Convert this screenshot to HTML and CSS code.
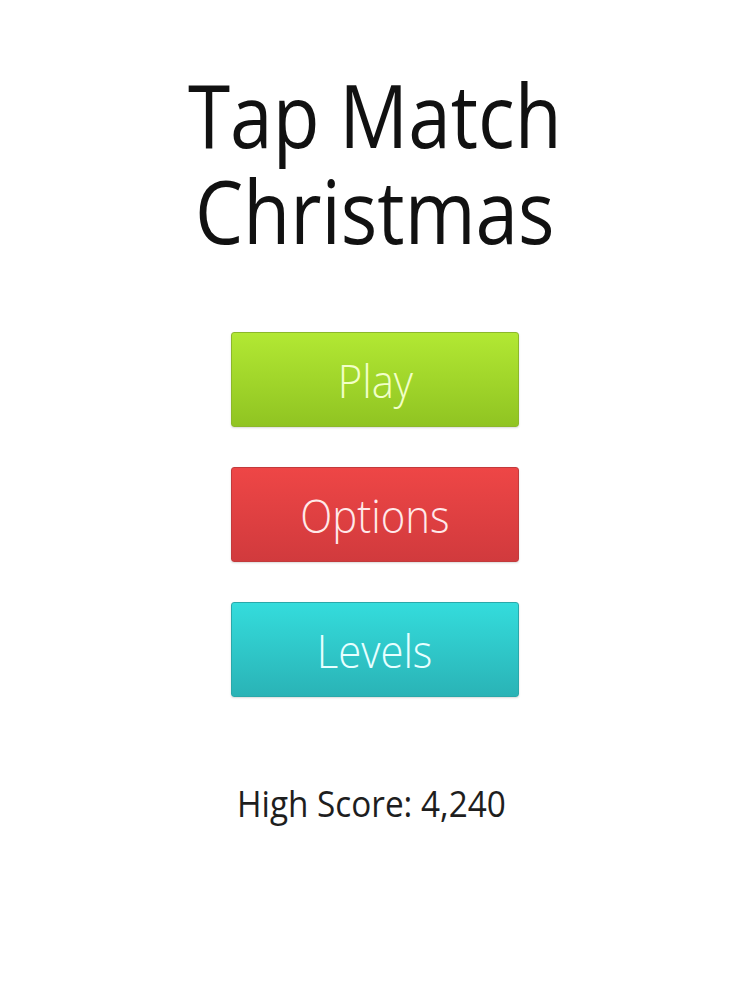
FILE: index.html
```html
<!DOCTYPE html>
<html lang="en">
<head>
<meta charset="utf-8">
<title>Tap Match Christmas</title>
<link rel="stylesheet" href="styles.css">
</head>
<body>
<main class="menu">
  <h1 class="title">
    <span class="title-line">Tap Match</span>
    <span class="title-line">Christmas</span>
  </h1>
  <nav class="buttons">
    <button class="btn btn-play"><span class="label">Play</span></button>
    <button class="btn btn-options"><span class="label">Options</span></button>
    <button class="btn btn-levels"><span class="label">Levels</span></button>
  </nav>
  <p class="score"><span class="label">High Score: 4,240</span></p>
</main>
</body>
</html>
```

FILE: styles.css
```css
html, body {
  margin: 0;
  padding: 0;
  background: #ffffff;
}

.menu {
  width: 750px;
  height: 1000px;
  display: flex;
  flex-direction: column;
  align-items: center;
  font-family: "Open Sans", "DejaVu Sans", sans-serif;
}

.label {
  display: inline-block;
  transform: scaleX(0.91);
}

.title {
  margin: 66px 0 0;
  font-size: 88px;
  font-weight: 400;
  text-align: center;
  color: #111111;
}

.title-line {
  display: block;
  height: 96px;
  line-height: 96px;
  transform: scaleX(0.87);
}

.buttons {
  margin-top: 74px;
  display: flex;
  flex-direction: column;
  gap: 40px;
}

.btn {
  width: 288px;
  height: 95px;
  border-radius: 3px;
  font-family: inherit;
  font-size: 46px;
  font-weight: 300;
  padding: 0;
  cursor: pointer;
  box-shadow: 0 1px 2px rgba(0, 0, 0, 0.15);
}

.btn-play {
  background: linear-gradient(#b2e833, #90c422);
  border: 1px solid #8cb82a;
  color: #f2ffc8;
}

.btn-options {
  background: linear-gradient(#ee4646, #d13a3d);
  border: 1px solid #c23a3c;
  color: #ffe9ea;
}

.btn-levels {
  background: linear-gradient(#34dcdc, #2ab3b6);
  border: 1px solid #2aa8aa;
  color: #e8ffff;
}

.score {
  margin: 80px 0 0;
  padding-right: 8px;
  font-size: 37px;
  font-weight: 400;
  color: #1e1e1e;
}

.score .label {
  transform: scaleX(0.9);
}
```
